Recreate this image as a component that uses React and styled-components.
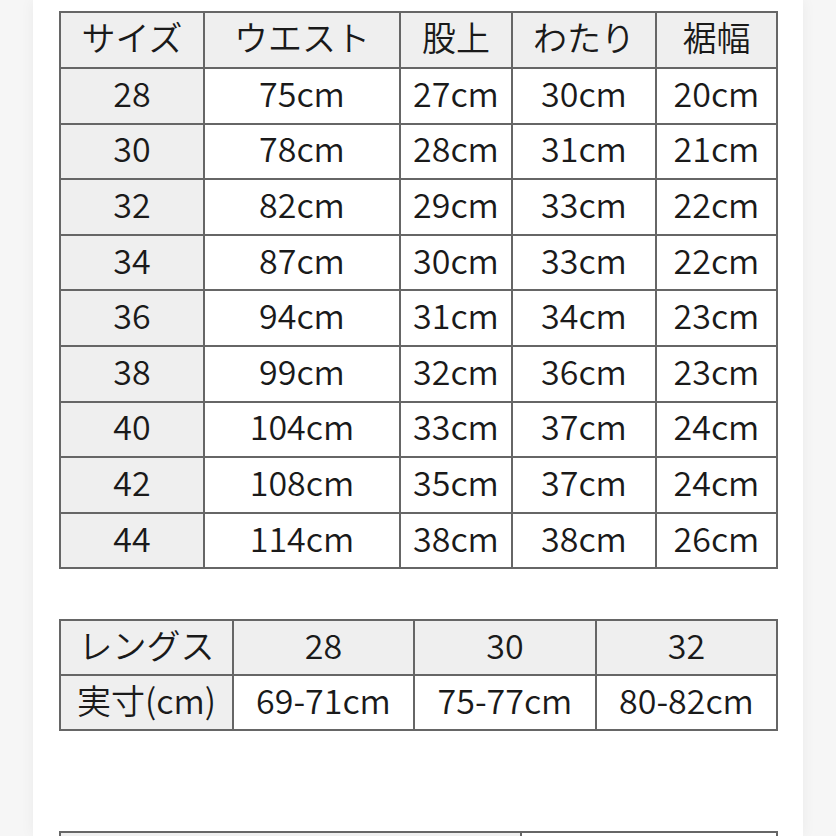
import React from "react";
import styled, { createGlobalStyle } from "styled-components";

const Global = createGlobalStyle`
  html, body { margin: 0; padding: 0; background: #f6f6f6; }
  body { font-family: "Noto Sans CJK JP", "Noto Sans", sans-serif; }
  #root { height: 836px; overflow: hidden; }
`;

const Panel = styled.div`
  margin: 0 33px;
  height: 836px;
  background: #ffffff;
  box-shadow: 0 0 14px rgba(0, 0, 0, 0.05);
  padding: 11px 27px 0 26px;
  box-sizing: border-box;
  overflow: hidden;
  display: flex;
  flex-direction: column;
  gap: ${(p) => p.$gap}px;
`;

const Table = styled.table`
  width: 717px;
  table-layout: fixed;
  border-collapse: collapse;
  border: 2px solid #666;
  margin-top: ${(p) => p.$top || 0}px;
  flex: none;
`;

const Col = styled.col`
  width: ${(p) => p.$w}px;
`;

const Row = styled.tr`
  height: ${(p) => p.$h}px;
`;

const Cell = styled.td`
  padding: 0 0 6px;
  border: 2px solid #666;
  background: ${(p) => (p.$shade ? "#efefef" : "#ffffff")};
  text-align: center;
  vertical-align: middle;
  font-size: 34px;
  font-weight: 350;
  line-height: 1;
  color: #1a1a1a;
  white-space: nowrap;
`;

const sizeCols = [144, 196, 112, 144, 121];
const sizeHead = ["サイズ", "ウエスト", "股上", "わたり", "裾幅"];
const sizeRows = [
  ["28", "75cm", "27cm", "30cm", "20cm"],
  ["30", "78cm", "28cm", "31cm", "21cm"],
  ["32", "82cm", "29cm", "33cm", "22cm"],
  ["34", "87cm", "30cm", "33cm", "22cm"],
  ["36", "94cm", "31cm", "34cm", "23cm"],
  ["38", "99cm", "32cm", "36cm", "23cm"],
  ["40", "104cm", "33cm", "37cm", "24cm"],
  ["42", "108cm", "35cm", "37cm", "24cm"],
  ["44", "114cm", "38cm", "38cm", "26cm"],
];

const lengthCols = [173, 181, 182, 181];
const lengthRows = [
  ["レングス", "28", "30", "32"],
  ["実寸(cm)", "69-71cm", "75-77cm", "80-82cm"],
];

function Cols({ widths }) {
  return (
    <colgroup>
      {widths.map((w, i) => (
        <Col key={i} $w={w} />
      ))}
    </colgroup>
  );
}

export default function App() {
  return (
    <>
      <Global />
      <Panel $gap={50}>
        <Table>
          <Cols widths={sizeCols} />
          <tbody>
            <Row $h={56}>
              {sizeHead.map((h) => (
                <Cell key={h} $shade>{h}</Cell>
              ))}
            </Row>
            {sizeRows.map((r) => (
              <Row key={r[0]} $h={55.6}>
                {r.map((c, i) => (
                  <Cell key={i} $shade={i === 0}>{c}</Cell>
                ))}
              </Row>
            ))}
          </tbody>
        </Table>
        <Table>
          <Cols widths={lengthCols} />
          <tbody>
            {lengthRows.map((r, ri) => (
              <Row key={ri} $h={55}>
                {r.map((c, i) => (
                  <Cell key={i} $shade={ri === 0 || i === 0}>{c}</Cell>
                ))}
              </Row>
            ))}
          </tbody>
        </Table>
        <Table $top={50}>
          <Cols widths={[461, 256]} />
          <tbody>
            <Row $h={55}>
              <Cell $shade>&nbsp;</Cell>
              <Cell>&nbsp;</Cell>
            </Row>
          </tbody>
        </Table>
      </Panel>
    </>
  );
}
